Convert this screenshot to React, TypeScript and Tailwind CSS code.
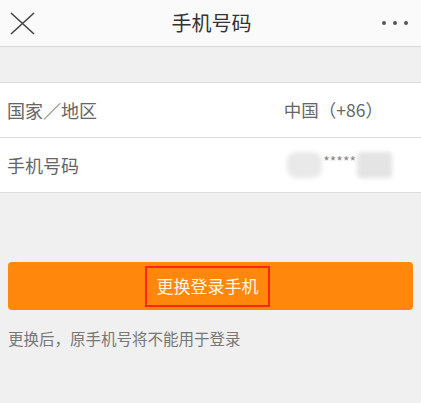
import React from 'react';

const font = { fontFamily: '"Noto Sans CJK SC", "Noto Sans", sans-serif' };

export default function App() {
  return (
    <div className="w-[421px] h-[403px] bg-[#f0f0f0] overflow-hidden" style={font}>
      {/* 顶部导航 */}
      <div className="h-[47px] bg-[#fafafa] border-b border-[#d9d9d9] flex items-center justify-between px-[10px]">
        <svg width="25" height="23" viewBox="0 0 25 23" className="text-[#444]">
          <path d="M1 1L24 22M24 1L1 22" stroke="currentColor" strokeWidth="1.6" fill="none" />
        </svg>
        <div className="text-[20px] text-[#333] leading-none pl-[6px]">手机号码</div>
        <div className="flex gap-[7px] pr-[3px]">
          <span className="w-[4px] h-[4px] rounded-full bg-[#555]" />
          <span className="w-[4px] h-[4px] rounded-full bg-[#555]" />
          <span className="w-[4px] h-[4px] rounded-full bg-[#555]" />
        </div>
      </div>

      <div className="h-[35px]" />

      {/* 列表 */}
      <div className="bg-white border-t border-[#dcdcdc]">
        <div className="h-[55px] flex items-center justify-between pl-[7px] pr-[38px] border-b border-[#dcdcdc] text-[18px] text-[#666]">
          <span>国家／地区</span>
          <span className="text-[17.5px]">中国（+86）</span>
        </div>
        <div className="h-[55px] flex items-center justify-between pl-[7px] pr-[29px] border-b border-[#dcdcdc] text-[18px] text-[#666]">
          <span>手机号码</span>
          <div className="flex items-center">
            <span className="w-[35px] h-[26px] rounded-[9px] bg-[#e9e9e9] blur-[2px]" />
            <span className="text-[14px] text-[#888] -mt-[8px] px-[1px]">*****</span>
            <span className="w-[35px] h-[26px] rounded-[4px] bg-[#e4e4e4] blur-[2px]" />
          </div>
        </div>
      </div>

      {/* 按钮 */}
      <div className="px-[8px] pt-[69px]">
        <div className="h-[48px] rounded-[4px] bg-[#ff870b] flex items-center justify-center">
          <div className="h-[41px] w-[125px] border-2 border-[#ff2416] flex items-center justify-center text-[17px] text-[#fff6e8] -ml-[6px]">
            更换登录手机
          </div>
        </div>
      </div>

      <div className="px-[8px] pt-[17px] text-[15.5px] text-[#777]">更换后，原手机号将不能用于登录</div>
    </div>
  );
}
